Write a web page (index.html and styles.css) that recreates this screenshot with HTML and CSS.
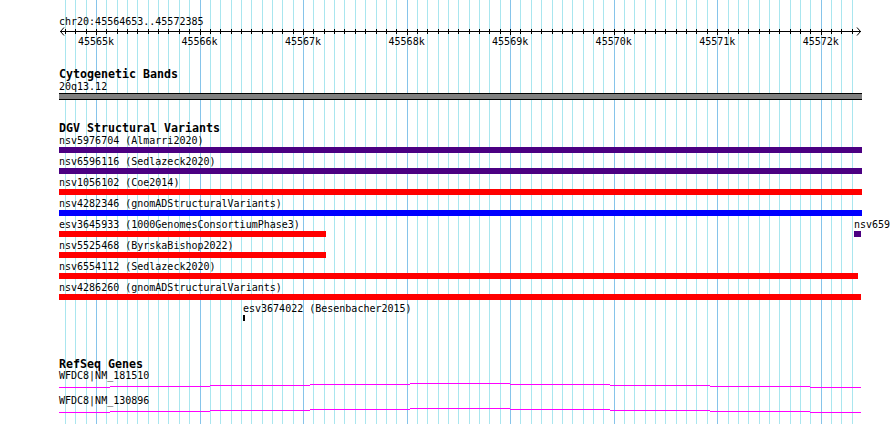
FILE: index.html
```html
<!DOCTYPE html>
<html lang="en">
<head>
  <meta charset="UTF-8">
  <meta name="viewport" content="width=device-width, initial-scale=1.0">
  <title>chr20:45564653..45572385</title>
  <link rel="stylesheet" href="styles.css">
</head>
<body>
  <div class="browser">
    <svg class="grid" id="grid" width="890" height="424"></svg>

    <div class="ruler">
      <div class="ruler-name">chr20:45564653..45572385</div>
      <svg class="ruler-scale" id="ruler" width="803" height="20"></svg>
    </div>

    <section class="track track-cyto">
      <h2 class="track-title">Cytogenetic Bands</h2>
      <div class="label">20q13.12</div>
      <div class="band"></div>
    </section>

    <section class="track track-dgv">
      <h2 class="track-title">DGV Structural Variants</h2>
      <div class="row">
        <div class="feature" style="width:803px">
          <div class="label">nsv5976704 (Almarri2020)</div>
          <div class="bar loss-gain"></div>
        </div>
      </div>
      <div class="row">
        <div class="feature" style="width:803px">
          <div class="label">nsv6596116 (Sedlazeck2020)</div>
          <div class="bar loss-gain"></div>
        </div>
      </div>
      <div class="row">
        <div class="feature" style="width:803px">
          <div class="label">nsv1056102 (Coe2014)</div>
          <div class="bar loss"></div>
        </div>
      </div>
      <div class="row">
        <div class="feature" style="width:803px">
          <div class="label">nsv4282346 (gnomADStructuralVariants)</div>
          <div class="bar gain"></div>
        </div>
      </div>
      <div class="row">
        <div class="feature" style="width:267px">
          <div class="label">esv3645933 (1000GenomesConsortiumPhase3)</div>
          <div class="bar loss"></div>
        </div>
        <div class="feature" style="margin-left:528px;width:7px">
          <div class="label">nsv659</div>
          <div class="bar loss-gain"></div>
        </div>
      </div>
      <div class="row">
        <div class="feature" style="width:267px">
          <div class="label">nsv5525468 (ByrskaBishop2022)</div>
          <div class="bar loss"></div>
        </div>
      </div>
      <div class="row">
        <div class="feature" style="width:799px">
          <div class="label">nsv6554112 (Sedlazeck2020)</div>
          <div class="bar loss"></div>
        </div>
      </div>
      <div class="row">
        <div class="feature" style="width:802px">
          <div class="label">nsv4286260 (gnomADStructuralVariants)</div>
          <div class="bar loss"></div>
        </div>
      </div>
      <div class="row">
        <div class="feature" style="margin-left:184px;width:2px">
          <div class="label">esv3674022 (Besenbacher2015)</div>
          <div class="bar other"></div>
        </div>
      </div>
    </section>

    <section class="track track-genes">
      <h2 class="track-title">RefSeq Genes</h2>
      <div class="gene-row">
        <div class="label">WFDC8|NM_181510</div>
        <svg class="gene" width="803" height="6">
          <path d="M0 5.5H51M51 4.5H151M151 3.5H251M251 2.5H351M351 1.5H451M451 2.5H551M551 3.5H651M651 4.5H751M751 5.5H802"/>
        </svg>
      </div>
      <div class="gene-row">
        <div class="label">WFDC8|NM_130896</div>
        <svg class="gene" width="803" height="6">
          <path d="M0 5.5H51M51 4.5H151M151 3.5H251M251 2.5H351M351 1.5H451M451 2.5H551M551 3.5H651M651 4.5H751M751 5.5H802"/>
        </svg>
      </div>
    </section>
  </div>

  <script>
    const SVGNS = 'http://www.w3.org/2000/svg';
    const start = 45564653;
    const end = 45572385;
    const left = 59;
    const scale = 0.10353; // px per bp

    function px(bp) {
      return 60.1 + (bp - start) * scale;
    }

    function el(name, attrs) {
      const node = document.createElementNS(SVGNS, name);
      for (const key in attrs) node.setAttribute(key, attrs[key]);
      return node;
    }

    const grid = document.getElementById('grid');
    const ruler = document.getElementById('ruler');

    ruler.appendChild(el('path', { class: 'axis', d: 'M1 4.5H802' }));
    ruler.appendChild(el('path', { class: 'arrow', d: 'M5 0.5L1.5 4.5L5 8.5' }));
    ruler.appendChild(el('path', { class: 'arrow', d: 'M798 0.5L801.5 4.5L798 8.5' }));

    for (let bp = Math.ceil(start / 100) * 100; bp <= end; bp += 100) {
      const col = Math.round(px(bp));
      const major = bp % 1000 === 0;
      grid.appendChild(el('line', {
        class: major ? 'major' : 'minor',
        x1: col + 0.5, x2: col + 0.5, y1: 0, y2: 424
      }));
      ruler.appendChild(el('line', {
        class: 'tick',
        x1: col - left + 0.5, x2: col - left + 0.5, y1: 2, y2: major ? 8 : 7
      }));
      if (major) {
        const text = el('text', { x: px(bp) - left, y: 18 });
        text.textContent = (bp / 1000) + 'k';
        ruler.appendChild(text);
      }
    }
  </script>
</body>
</html>
```

FILE: styles.css
```css
body {
  margin: 0;
  background: #fff;
  color: #000;
  font-family: "DejaVu Sans Mono", "Liberation Mono", monospace;
  font-size: 10px;
}
.browser {
  position: relative;
  z-index: 0;
  width: 890px;
  height: 424px;
  overflow: hidden;
  box-sizing: border-box;
  padding: 16px 0 0 59px;
  background: #fff;
}
.grid {
  position: absolute;
  left: 0;
  top: 0;
  z-index: -1;
}
.grid line {
  stroke-width: 1;
  shape-rendering: crispEdges;
}
.grid .minor {
  stroke: #a9e6ef;
}
.grid .major {
  stroke: #86c4ea;
}

.ruler-name,
.label {
  line-height: 11px;
  white-space: nowrap;
}
.ruler-scale {
  display: block;
  overflow: visible;
}
.ruler-scale .axis,
.ruler-scale .tick {
  stroke: #000;
  stroke-width: 1;
  fill: none;
  shape-rendering: crispEdges;
}
.ruler-scale .arrow {
  stroke: #000;
  stroke-width: 1;
  fill: none;
}
.ruler-scale text {
  font-family: "DejaVu Sans Mono", "Liberation Mono", monospace;
  font-size: 10px;
  text-anchor: middle;
  fill: #000;
}

.track-title {
  margin: 0;
  font-size: 11.63px;
  font-weight: bold;
  line-height: 14px;
  white-space: nowrap;
}
.track-cyto {
  margin-top: 20px;
}
.band {
  width: 803px;
  height: 5px;
  margin-top: 1px;
  background: #808080;
  border-top: 1px solid #000;
  border-bottom: 1px solid #000;
}

.track-dgv {
  margin-top: 21px;
}
.row {
  display: flex;
  height: 21px;
}
.feature {
  flex: none;
}
.bar {
  height: 6px;
  margin-top: 1px;
}
.bar.loss {
  background: #ff0000;
}
.bar.gain {
  background: #0000ff;
}
.bar.loss-gain {
  background: #4b0082;
}
.bar.other {
  background: #000;
}

.track-genes {
  margin-top: 33px;
}
.gene-row {
  height: 25px;
}
.gene-row .label {
  position: relative;
  z-index: 1;
  line-height: 10px;
  height: 11px;
}
.gene {
  display: block;
}
.gene path {
  stroke: #ff00ff;
  stroke-width: 1;
  fill: none;
  shape-rendering: crispEdges;
}
```
